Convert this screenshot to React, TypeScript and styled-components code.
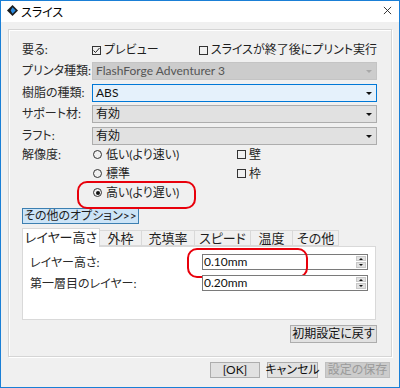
import React from 'react';
import styled, { createGlobalStyle } from 'styled-components';

const GlobalStyle = createGlobalStyle`
  html, body {
    margin: 0;
    padding: 0;
    background: #ffffff;
  }
  body {
    font-family: Lato, 'Noto Sans CJK JP', sans-serif;
    font-size: 12px;
    font-feature-settings: 'palt';
    color: #1e1e1e;
  }
  * {
    box-sizing: border-box;
  }
`;

// tab captions with their widths as measured off the dialog
const TABS: [string, number][] = [
  ['レイヤー高さ', 78],
  ['外枠', 43],
  ['充填率', 54],
  ['スピード', 57],
  ['温度', 43],
  ['その他', 47],
];

const App = () => {
  return (
    <>
      <GlobalStyle />
      <Window>
        <TitleBar>
          <AppIcon viewBox='0 0 12 12'>
            <polygon points='6,0 12,6 6,12 0,6' fill='#1b1b1b' />
            <polygon points='6,2.5 9.5,6 6,9.5 4,6' fill='#2a8be0' />
          </AppIcon>
          <Title>スライス</Title>
          <CloseIcon viewBox='0 0 10 10'>
            <line x1='1' y1='1' x2='9' y2='9' stroke='#222' strokeWidth='1' />
            <line x1='9' y1='1' x2='1' y2='9' stroke='#222' strokeWidth='1' />
          </CloseIcon>
        </TitleBar>

        <Body>
          <GroupBox>
            <TopRow>
              <Label>要る:</Label>
              <CheckItem $width={111}>
                <CheckBox $checked>
                  <svg viewBox='0 0 9 9' width='9' height='9'>
                    <polyline points='1.5,4.5 3.5,6.5 7.5,2' fill='none' stroke='#222' strokeWidth='1' />
                  </svg>
                </CheckBox>
                プレビュー
              </CheckItem>
              <CheckItem>
                <CheckBox />
                スライスが終了後にプリント実行
              </CheckItem>
            </TopRow>

            <ComboList>
              <ComboRow>
                <Label>プリンタ種類:</Label>
                <Combo $variant='disabled'>
                  FlashForge Adventurer 3<Arrow $muted />
                </Combo>
              </ComboRow>
              <ComboRow>
                <Label>樹脂の種類:</Label>
                <Combo $variant='focused'>
                  ABS<Arrow />
                </Combo>
              </ComboRow>
              <ComboRow>
                <Label>サポート材:</Label>
                <Combo>
                  有効<Arrow />
                </Combo>
              </ComboRow>
              <ComboRow>
                <Label>ラフト:</Label>
                <Combo>
                  有効<Arrow />
                </Combo>
              </ComboRow>
            </ComboList>

            <ResolutionGrid>
              <Label>解像度:</Label>
              <RadioItem>
                <Radio />
                低い(より速い)
              </RadioItem>
              <CheckItem>
                <CheckBox />壁
              </CheckItem>

              <span />
              <RadioItem>
                <Radio />
                標準
              </RadioItem>
              <CheckItem>
                <CheckBox />枠
              </CheckItem>

              <span />
              <RadioItem $marked>
                <Radio $checked />
                高い(より遅い)
              </RadioItem>
              <span />
            </ResolutionGrid>

            <OptionsButton>その他のオプション&gt;&gt;</OptionsButton>

            <TabStrip>
              {TABS.map(([tab, width], i) => (
                <Tab key={tab} $width={width} $active={i === 0}>
                  {tab}
                </Tab>
              ))}
            </TabStrip>
            <TabPanel>
              <FieldRow>
                <FieldLabel>レイヤー高さ:</FieldLabel>
                <SpinInput $marked>
                  0.10mm
                  <Spinner>
                    <SpinHalf>
                      <TinyUp />
                    </SpinHalf>
                    <SpinHalf>
                      <TinyDown />
                    </SpinHalf>
                  </Spinner>
                </SpinInput>
              </FieldRow>
              <FieldRow>
                <FieldLabel>第一層目のレイヤー:</FieldLabel>
                <SpinInput>
                  0.20mm
                  <Spinner>
                    <SpinHalf>
                      <TinyUp />
                    </SpinHalf>
                    <SpinHalf>
                      <TinyDown />
                    </SpinHalf>
                  </Spinner>
                </SpinInput>
              </FieldRow>
            </TabPanel>

            <ResetRow>
              <Button $width={87} $height={18}>
                初期設定に戻す
              </Button>
            </ResetRow>
          </GroupBox>

          <Footer>
            <Button $width={50}>[OK]</Button>
            <Button $width={51}>キャンセル</Button>
            <Button $width={65} $disabled>
              設定の保存
            </Button>
          </Footer>
        </Body>
      </Window>
    </>
  );
};

export default App;

const Window = styled.div`
  width: 400px;
  height: 388px;
  border: 1px solid #1a7fd6;
  display: flex;
  flex-direction: column;
  background: #f0f0f0;
`;

const TitleBar = styled.div`
  height: 21px;
  background: #ffffff;
  display: flex;
  align-items: center;
  padding: 0 6px 0 6px;
`;

const AppIcon = styled.svg`
  width: 11px;
  height: 11px;
  margin-top: -2px;
`;

const Title = styled.span`
  margin-left: 3px;
  margin-top: -1px;
  font-size: 12px;
  color: #000;
`;

const CloseIcon = styled.svg`
  width: 9px;
  height: 9px;
  margin-left: auto;
  margin-right: 1px;
  margin-top: -2px;
`;

const Body = styled.div`
  flex: 1;
  padding: 7px 7px 0 7px;
  display: flex;
  flex-direction: column;
`;

const GroupBox = styled.div`
  border: 1px solid #d5d5d5;
  box-shadow: 1px 1px 0 #ffffff, inset 1px 1px 0 #ffffff;
  padding: 12px 14px 13px 13px;
  display: flex;
  flex-direction: column;
`;

const Label = styled.span`
  width: 70px;
  flex-shrink: 0;
  color: #2a2a2a;
  white-space: nowrap;
  line-height: 16px;
`;

const TopRow = styled.div`
  display: flex;
  align-items: center;
  height: 16px;
`;

const CheckItem = styled.span<{ $width?: number }>`
  display: inline-flex;
  align-items: center;
  white-space: nowrap;
  width: ${p => (p.$width ? `${p.$width}px` : 'auto')};
  line-height: 16px;
`;

const CheckBox = styled.span<{ $checked?: boolean }>`
  width: 9px;
  height: 9px;
  border: 1px solid #333;
  margin-right: 3px;
  display: inline-flex;
  align-items: center;
  justify-content: center;
  flex-shrink: 0;
  svg {
    display: block;
    margin: -1px;
  }
`;

const ComboList = styled.div`
  margin-top: 4px;
  display: flex;
  flex-direction: column;
  gap: 3.67px;
`;

const ComboRow = styled.div`
  display: flex;
  align-items: center;
  height: 18px;
`;

const Combo = styled.div<{ $variant?: 'disabled' | 'focused' }>`
  flex: 1;
  height: 18px;
  position: relative;
  display: flex;
  align-items: center;
  padding-left: 3px;
  line-height: 16px;
  border: 1px solid
    ${p => (p.$variant === 'focused' ? '#0078d7' : p.$variant === 'disabled' ? '#c4c4c4' : '#adadad')};
  background: ${p => (p.$variant === 'focused' ? '#e5f1fb' : p.$variant === 'disabled' ? '#cccccc' : '#e1e1e1')};
  color: ${p => (p.$variant === 'disabled' ? '#555' : '#111')};
`;

const Arrow = styled.span<{ $muted?: boolean }>`
  position: absolute;
  right: 4px;
  top: 7px;
  width: 0;
  height: 0;
  border-left: 3px solid transparent;
  border-right: 3px solid transparent;
  border-top: 3px solid ${p => (p.$muted ? '#a8a8a8' : '#111')};
`;

const ResolutionGrid = styled.div`
  margin-top: 0.5px;
  display: grid;
  grid-template-columns: 70px 145px 1fr;
  grid-auto-rows: 19px;
  align-items: center;
`;

const RadioItem = styled.span<{ $marked?: boolean }>`
  display: inline-flex;
  align-items: center;
  white-space: nowrap;
  position: relative;
  line-height: 16px;
  ${p =>
    p.$marked &&
    `
    &::after {
      content: '';
      position: absolute;
      left: -15px;
      top: -4px;
      width: 115px;
      height: 24px;
      border: 2.5px solid #e8000b;
      border-radius: 10px;
    }
  `}
`;

const Radio = styled.span<{ $checked?: boolean }>`
  width: 9px;
  height: 9px;
  border-radius: 50%;
  border: 1px solid #333;
  margin: 0 4px 0 1px;
  display: inline-flex;
  align-items: center;
  justify-content: center;
  flex-shrink: 0;
  &::after {
    content: '';
    display: ${p => (p.$checked ? 'block' : 'none')};
    width: 4px;
    height: 4px;
    border-radius: 50%;
    background: #111;
  }
`;

const OptionsButton = styled.div`
  margin-top: 6px;
  align-self: flex-start;
  height: 16px;
  min-width: 111px;
  line-height: 14px;
  border: 1px solid #3c7fb1;
  background: #cce4f7;
  white-space: nowrap;
  padding: 0 1px;
`;

const TabStrip = styled.div`
  margin-top: 3.5px;
  height: 18px;
  display: flex;
  align-items: flex-end;
  position: relative;
  z-index: 1;
`;

const Tab = styled.div<{ $active?: boolean; $width: number }>`
  width: ${p => p.$width}px;
  height: ${p => (p.$active ? '19px' : '16px')};
  margin-bottom: ${p => (p.$active ? '-1px' : '0')};
  background: ${p => (p.$active ? '#ffffff' : '#f0f0f0')};
  border: 1px solid #d9d9d9;
  border-bottom: ${p => (p.$active ? 'none' : '1px solid #d9d9d9')};
  margin-left: -1px;
  font-size: 13px;
  line-height: ${p => (p.$active ? '17px' : '14px')};
  text-align: center;
  white-space: nowrap;
  &:first-child {
    margin-left: 0;
  }
`;

const TabPanel = styled.div`
  height: 74px;
  margin-right: 1px;
  background: #ffffff;
  border: 1px solid #d9d9d9;
  padding: 7px 7px 0 7px;
  display: flex;
  flex-direction: column;
  gap: 5px;
`;

const FieldRow = styled.div`
  display: flex;
  align-items: center;
  height: 16px;
`;

const FieldLabel = styled.span`
  width: 172px;
  color: #2a2a2a;
  white-space: nowrap;
`;

const SpinInput = styled.div<{ $marked?: boolean }>`
  flex: 1;
  height: 16px;
  border: 1px solid #7a7a7a;
  background: #fff;
  position: relative;
  line-height: 14px;
  padding-left: 1px;
  color: #111;
  ${p =>
    p.$marked &&
    `
    &::after {
      content: '';
      position: absolute;
      left: -16px;
      top: -7px;
      width: 117px;
      height: 26px;
      border: 2.5px solid #e8000b;
      border-radius: 10px;
    }
  `}
`;

const Spinner = styled.div`
  position: absolute;
  right: 1px;
  top: 1px;
  bottom: 1px;
  width: 10px;
  display: flex;
  flex-direction: column;
  gap: 1px;
`;

const SpinHalf = styled.div`
  flex: 1;
  background: #e1e1e1;
  border: 1px solid #c8c8c8;
  display: flex;
  align-items: center;
  justify-content: center;
`;

const TinyUp = styled.span`
  width: 0;
  height: 0;
  border-left: 2px solid transparent;
  border-right: 2px solid transparent;
  border-bottom: 2px solid #111;
`;

const TinyDown = styled.span`
  width: 0;
  height: 0;
  border-left: 2px solid transparent;
  border-right: 2px solid transparent;
  border-top: 2px solid #111;
`;

const ResetRow = styled.div`
  margin-top: 5px;
  display: flex;
  justify-content: flex-end;
`;

const Button = styled.div<{ $width: number; $height?: number; $disabled?: boolean }>`
  width: ${p => p.$width}px;
  height: ${p => p.$height ?? 16}px;
  border: 1px solid ${p => (p.$disabled ? '#bfbfbf' : '#adadad')};
  background: ${p => (p.$disabled ? '#cccccc' : '#e1e1e1')};
  color: ${p => (p.$disabled ? '#9a9a9a' : '#111')};
  display: flex;
  align-items: center;
  justify-content: center;
  white-space: nowrap;
  line-height: 14px;
`;

const Footer = styled.div`
  display: flex;
  justify-content: flex-end;
  gap: 7px;
  padding: 5px 2px 0 0;
`;
